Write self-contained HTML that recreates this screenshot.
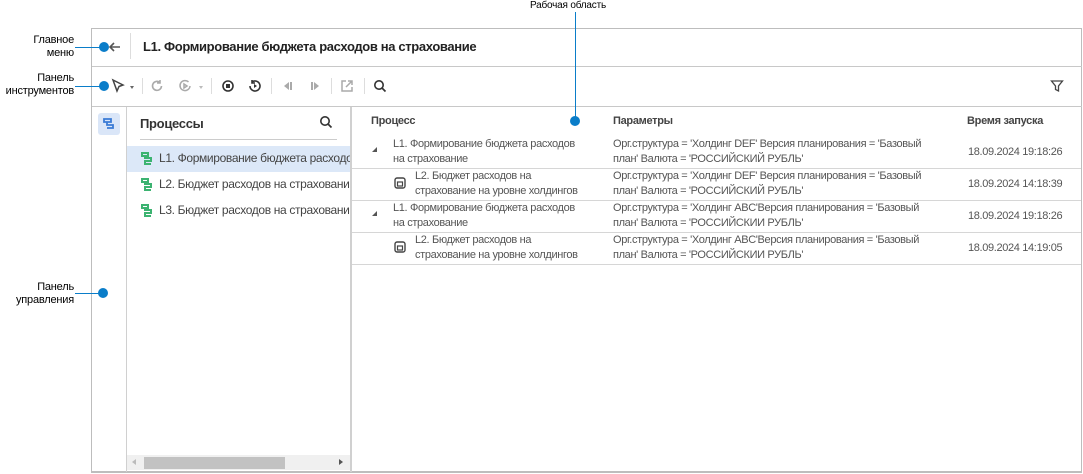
<!DOCTYPE html>
<html><head><meta charset="utf-8"><style>
*{margin:0;padding:0;box-sizing:border-box}
body{width:1083px;height:474px;background:#fff;font-family:"Liberation Sans",sans-serif;position:relative;overflow:hidden;color:#333}
.a{position:absolute}
.ann{font-size:11px;color:#000;text-align:right;line-height:13px;letter-spacing:-0.2px}
.dot{position:absolute;width:10px;height:10px;border-radius:50%;background:#0a7dc9}
.hl{position:absolute;height:1px;background:#0a7dc9}
.t{font-size:11px;letter-spacing:-0.35px;color:#555;line-height:15px;white-space:nowrap}
.h{font-size:11px;font-weight:bold;color:#444;letter-spacing:-0.3px}
.sep{position:absolute;width:1px;height:16px;background:#ddd;top:78px}
.rl{position:absolute;left:352px;width:729px;height:1px;background:#d6d6d6}
</style></head><body>
<div class="a" style="left:91px;top:28px;width:991px;height:445px;border:1px solid #bdbdbd;border-bottom:2px solid #bdbdbd"></div>
<div class="a" style="left:92px;top:66px;width:990px;height:1px;background:#c8c8c8"></div>
<div class="a" style="left:92px;top:106px;width:990px;height:1px;background:#c8c8c8"></div>
<div class="a" style="left:126px;top:107px;width:1px;height:365px;background:#d0d0d0"></div>
<div class="a" style="left:350px;top:107px;width:2px;height:365px;background:#d0d0d0"></div>
<div class="a" style="left:130px;top:33px;width:1px;height:26px;background:#ddd"></div>
<svg class="a" style="left:108px;top:40px" width="14" height="14" viewBox="0 0 14 14"><path d="M12 7H2M6 3L2 7l4 4" stroke="#555" stroke-width="1.6" fill="none"/></svg>
<div class="a" style="left:143px;top:39px;font-size:13px;font-weight:bold;color:#222;letter-spacing:-0.35px">L1. Формирование бюджета расходов на страхование</div>
<svg class="a" style="left:110px;top:78px" width="16" height="16" viewBox="0 0 16 16"><path d="M3 2l10 5-4 1.5L7 13z" fill="none" stroke="#444" stroke-width="1.5"/></svg>
<div class="a" style="left:130px;top:86px;width:0;height:0;border:2.5px solid transparent;border-top:3px solid #666"></div>
<div class="sep" style="left:142px"></div>
<svg class="a" style="left:150px;top:79px" width="14" height="14"><path d="M11.5 7A4.5 4.5 0 1 1 10 3.5M10 1v3h-3" stroke="#aaa" stroke-width="1.6" fill="none"/></svg>
<svg class="a" style="left:178px;top:79px" width="14" height="14"><path d="M12 7A5 5 0 1 1 10.5 3M6 5l3 2-3 2z" stroke="#aaa" stroke-width="1.5" fill="none"/></svg>
<div class="a" style="left:199px;top:86px;border:2.5px solid transparent;border-top:3px solid #bbb"></div>
<div class="sep" style="left:211px"></div>
<svg class="a" style="left:221px;top:79px" width="14" height="14"><circle cx="7" cy="7" r="5" stroke="#333" stroke-width="1.6" fill="none"/><rect x="5" y="5" width="4" height="4" fill="#333"/></svg>
<svg class="a" style="left:248px;top:79px" width="14" height="14"><path d="M2 7A5 5 0 1 0 4 3M4 1v3h3" stroke="#333" stroke-width="1.6" fill="none"/><path d="M6 5l3 2-3 2z" fill="#333"/></svg>
<div class="sep" style="left:271px"></div>
<svg class="a" style="left:281px;top:80px" width="14" height="12"><path d="M8 2L3 6l5 4z" fill="#aaa"/><rect x="9" y="2" width="2" height="8" fill="#aaa"/></svg>
<svg class="a" style="left:308px;top:80px" width="14" height="12"><rect x="3" y="2" width="2" height="8" fill="#aaa"/><path d="M6 2l5 4-5 4z" fill="#aaa"/></svg>
<div class="sep" style="left:331px"></div>
<svg class="a" style="left:340px;top:79px" width="14" height="14"><path d="M6 2H2v10h10V8M8 2h4v4M12 2L6 8" stroke="#aaa" stroke-width="1.5" fill="none"/></svg>
<div class="sep" style="left:364px"></div>
<svg class="a" style="left:373px;top:79px" width="14" height="14"><circle cx="6" cy="6" r="4.2" stroke="#333" stroke-width="1.6" fill="none"/><path d="M9 9l3.5 3.5" stroke="#333" stroke-width="1.7"/></svg>
<svg class="a" style="left:1050px;top:79px" width="14" height="14"><path d="M1.5 2h11L8.5 7v5l-3-1.5V7z" stroke="#444" stroke-width="1.3" fill="none"/></svg>
<div class="a" style="left:98px;top:113px;width:22px;height:22px;background:#dae6f8;border-radius:3px"></div>
<svg class="a" style="left:102px;top:117px" width="14" height="14"><path d="M2 2h7v3H2zM5 5v3h6v3H5" stroke="#3a7bd5" stroke-width="1.8" fill="none"/></svg>
<div class="a" style="left:140px;top:116px;font-size:13px;font-weight:bold;color:#333;letter-spacing:-0.3px">Процессы</div>
<svg class="a" style="left:319px;top:115px" width="14" height="14"><circle cx="6" cy="6" r="4.2" stroke="#333" stroke-width="1.6" fill="none"/><path d="M9 9l3.5 3.5" stroke="#333" stroke-width="1.7"/></svg>
<div class="a" style="left:140px;top:139px;width:197px;height:1px;background:#ccc"></div>
<div class="a" style="left:127px;top:146px;width:223px;height:26px;background:#dce8f8"></div>
<div class="a" style="left:127px;top:146px;width:223px;overflow:hidden;height:80px">
<div class="a t" style="left:32px;top:5px;font-size:12px;color:#444">L1. Формирование бюджета расходов на страхование</div>
<div class="a t" style="left:32px;top:31px;font-size:12px;color:#444">L2. Бюджет расходов на страхование</div>
<div class="a t" style="left:32px;top:57px;font-size:12px;color:#444">L3. Бюджет расходов на страхование</div>
</div>
<svg class="a" style="left:140px;top:151px" width="14" height="14"><path d="M2 2h6v3H2zM5 5v2h6v3H5v3h6" stroke="#3cb371" stroke-width="2" fill="none"/></svg>
<svg class="a" style="left:140px;top:177px" width="14" height="14"><path d="M2 2h6v3H2zM5 5v2h6v3H5v3h6" stroke="#3cb371" stroke-width="2" fill="none"/></svg>
<svg class="a" style="left:140px;top:203px" width="14" height="14"><path d="M2 2h6v3H2zM5 5v2h6v3H5v3h6" stroke="#3cb371" stroke-width="2" fill="none"/></svg>
<div class="a" style="left:127px;top:455px;width:223px;height:15px;background:#f0f0f0"></div>
<div class="a" style="left:144px;top:457px;width:141px;height:12px;background:#c2c2c2"></div>
<div class="a" style="left:132px;top:459px;border:3px solid transparent;border-right:4px solid #bbb;border-left:0"></div>
<div class="a" style="left:339px;top:459px;border:3px solid transparent;border-left:4px solid #555;border-right:0"></div>
<div class="a h" style="left:371px;top:115px">Процесс</div>
<div class="a h" style="left:613px;top:115px">Параметры</div>
<div class="a h" style="left:967px;top:115px">Время запуска</div>
<div class="rl" style="top:168px"></div><div class="rl" style="top:200px"></div><div class="rl" style="top:232px"></div><div class="rl" style="top:264px"></div>
<div class="a" style="left:372px;top:147px;border-left:5px solid transparent;border-bottom:5px solid #555"></div>
<div class="a" style="left:372px;top:211px;border-left:5px solid transparent;border-bottom:5px solid #555"></div>
<svg class="a" style="left:394px;top:177px" width="12" height="12"><rect x="1" y="1" width="10" height="10" rx="2" stroke="#444" stroke-width="1.4" fill="none"/><rect x="3.5" y="5" width="5" height="4" stroke="#444" stroke-width="1.2" fill="none"/></svg>
<svg class="a" style="left:394px;top:241px" width="12" height="12"><rect x="1" y="1" width="10" height="10" rx="2" stroke="#444" stroke-width="1.4" fill="none"/><rect x="3.5" y="5" width="5" height="4" stroke="#444" stroke-width="1.2" fill="none"/></svg>
<div class="a t" style="left:393px;top:137px">L1. Формирование бюджета расходов<br>на страхование</div>
<div class="a t" style="left:415px;top:169px">L2. Бюджет расходов на<br>страхование на уровне холдингов</div>
<div class="a t" style="left:393px;top:201px">L1. Формирование бюджета расходов<br>на страхование</div>
<div class="a t" style="left:415px;top:233px">L2. Бюджет расходов на<br>страхование на уровне холдингов</div>
<div class="a t" style="left:613px;top:137px">Орг.структура = 'Холдинг DEF' Версия планирования = 'Базовый<br>план' Валюта = 'РОССИЙСКИЙ РУБЛЬ'</div>
<div class="a t" style="left:613px;top:169px">Орг.структура = 'Холдинг DEF' Версия планирования = 'Базовый<br>план' Валюта = 'РОССИЙСКИЙ РУБЛЬ'</div>
<div class="a t" style="left:613px;top:201px">Орг.структура = 'Холдинг ABC'Версия планирования = 'Базовый<br>план' Валюта = 'РОССИЙСКИИ РУБЛЬ'</div>
<div class="a t" style="left:613px;top:233px">Орг.структура = 'Холдинг ABC'Версия планирования = 'Базовый<br>план' Валюта = 'РОССИЙСКИИ РУБЛЬ'</div>
<div class="a t" style="left:968px;top:145px">18.09.2024 19:18:26</div>
<div class="a t" style="left:968px;top:177px">18.09.2024 14:18:39</div>
<div class="a t" style="left:968px;top:209px">18.09.2024 19:18:26</div>
<div class="a t" style="left:968px;top:241px">18.09.2024 14:19:05</div>
<div class="a ann" style="right:1009px;top:34px">Главное<br>меню</div>
<div class="hl" style="left:75px;top:47px;width:28px"></div><div class="dot" style="left:99px;top:42px"></div>
<div class="a ann" style="right:1009px;top:72px">Панель<br>инструментов</div>
<div class="hl" style="left:75px;top:86px;width:28px"></div><div class="dot" style="left:99px;top:81px"></div>
<div class="a ann" style="right:1009px;top:281px">Панель<br>управления</div>
<div class="hl" style="left:75px;top:293px;width:28px"></div><div class="dot" style="left:98px;top:288px"></div>
<div class="a ann" style="left:530px;top:-1px;text-align:left;font-size:10px">Рабочая область</div>
<div class="a" style="left:575px;top:12px;width:1px;height:108px;background:#0a7dc9"></div>
<div class="dot" style="left:570px;top:116px"></div>
</body></html>
